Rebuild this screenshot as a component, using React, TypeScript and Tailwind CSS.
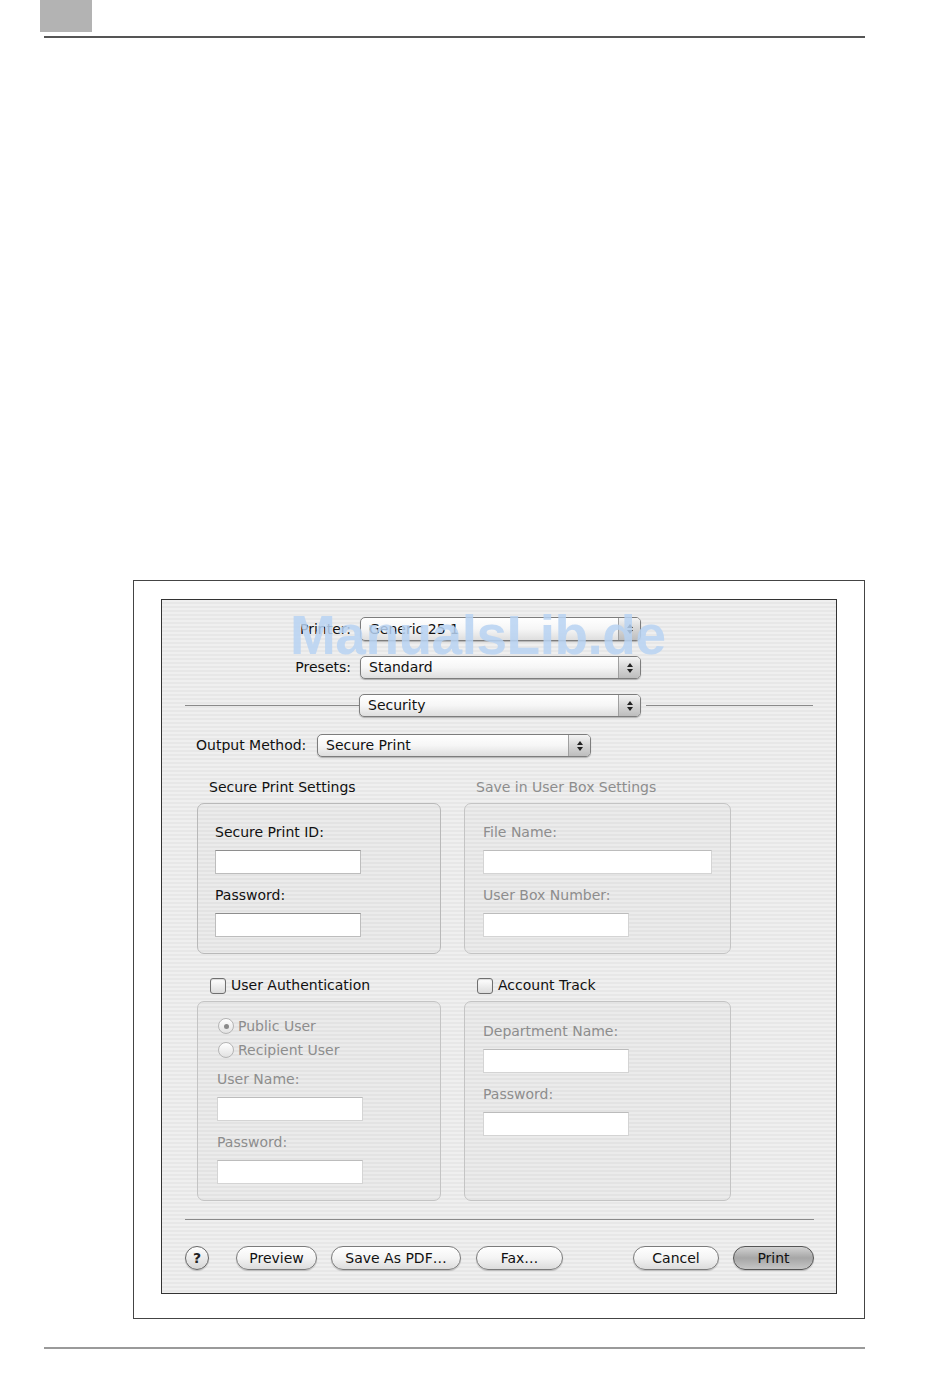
import React from "react";

const FONT = "font-['DejaVu_Sans',sans-serif]";

function Arrows() {
  return (
    <svg width="8" height="12" viewBox="0 0 8 12">
      <path d="M4 1 L7 5 L1 5 Z" fill="#222" />
      <path d="M4 11 L7 7 L1 7 Z" fill="#222" />
    </svg>
  );
}

function Popup({ label, width, h = "h-[24px]" }: { label: string; width: string; h?: string }) {
  return (
    <div
      className={`${width} ${h} flex items-stretch rounded-[5px] border border-[#7d7d7d] bg-gradient-to-b from-white via-[#f6f6f6] to-[#dedede] shadow-[0_1px_1px_rgba(0,0,0,0.25)]`}
    >
      <div className="flex-1 flex items-center pl-[8px] text-[14px] text-[#111]">{label}</div>
      <div className="w-[22px] flex items-center justify-center border-l border-[#a0a0a0] rounded-r-[4px] bg-gradient-to-b from-[#f4f4f4] via-[#d6d6d6] to-[#bdbdbd]">
        <Arrows />
      </div>
    </div>
  );
}

function Field({ width, disabled = false }: { width: string; disabled?: boolean }) {
  return (
    <div
      className={`${width} h-[24px] bg-white border ${
        disabled ? "border-[#d4d4d4] border-t-[#bcbcbc]" : "border-[#bdbdbd] border-t-[#8e8e8e]"
      }`}
    />
  );
}

function Checkbox({ label }: { label: string }) {
  return (
    <div className="flex items-center gap-[5px]">
      <div className="w-[16px] h-[16px] rounded-[3px] border border-[#6f6f6f] bg-gradient-to-b from-white to-[#dcdcdc] shadow-[inset_0_1px_1px_rgba(0,0,0,0.15)]" />
      <span className="text-[14px] text-[#111]">{label}</span>
    </div>
  );
}

function Radio({ label, checked }: { label: string; checked?: boolean }) {
  return (
    <div className="flex items-center gap-[4px] h-[16px]">
      <div className="w-[16px] h-[16px] rounded-full border border-[#b5b5b5] bg-gradient-to-b from-white to-[#e2e2e2] flex items-center justify-center">
        {checked && <div className="w-[5px] h-[5px] rounded-full bg-[#8a8a8a]" />}
      </div>
      <span className="text-[14px] text-[#8d8d8d]">{label}</span>
    </div>
  );
}

function Label({ children, dim, className = "" }: { children: React.ReactNode; dim?: boolean; className?: string }) {
  return (
    <div className={`text-[14px] leading-[16px] ${dim ? "text-[#8d8d8d]" : "text-[#111]"} ${className}`}>
      {children}
    </div>
  );
}

function PillButton({ label, width, primary }: { label: string; width: string; primary?: boolean }) {
  return (
    <div
      className={`${width} h-[24px] rounded-full border flex items-center justify-center text-[14px] text-[#111] shadow-[0_1px_1px_rgba(0,0,0,0.2)] ${
        primary
          ? "border-[#555] bg-gradient-to-b from-[#d2d2d2] via-[#a6a6a6] to-[#c6c6c6]"
          : "border-[#7b7b7b] bg-gradient-to-b from-white via-[#f4f4f4] to-[#dcdcdc]"
      }`}
    >
      {label}
    </div>
  );
}

export default function App() {
  return (
    <div className={`w-[950px] h-[1378px] bg-white ${FONT} overflow-hidden`}>
      <div className="ml-[40px] w-[52px] h-[32px] bg-[#b3b3b3]" />
      <div className="ml-[44px] mt-[4px] w-[821px] h-[2px] bg-[#555]" />

      <div className="mt-[542px] ml-[133px] w-[732px] h-[739px] border border-[#444] pt-[18px] pl-[27px]">
        <div className="relative w-[676px] h-[695px] border border-[#333] bg-[repeating-linear-gradient(180deg,#efefef_0px,#efefef_2px,#e7e7e7_2px,#e7e7e7_4px)]">
          {/* printer / presets */}
          <div className="pt-[17px] flex flex-col gap-[15px]">
            <div className="flex items-center">
              <div className="w-[189px] text-right text-[14px] text-[#111]">Printer:</div>
              <div className="ml-[9px]">
                <Popup label="Generic 25 1" width="w-[281px]" />
              </div>
            </div>
            <div className="flex items-center">
              <div className="w-[189px] text-right text-[14px] text-[#111]">Presets:</div>
              <div className="ml-[9px]">
                <Popup label="Standard" width="w-[281px]" h="h-[23px]" />
              </div>
            </div>
          </div>

          <div className="mt-[15px] flex items-center">
            <div className="ml-[23px] w-[174px] h-px bg-[#8a8a8a]" />
            <Popup label="Security" width="w-[282px]" h="h-[23px]" />
            <div className="ml-[5px] w-[167px] h-px bg-[#8a8a8a]" />
          </div>

          <div className="mt-[17px] flex items-center ml-[34px]">
            <div className="w-[121px] text-[14px] text-[#111]">Output Method:</div>
            <Popup label="Secure Print" width="w-[274px]" h="h-[23px]" />
          </div>

          {/* top groups */}
          <div className="mt-[22px] ml-[35px] flex gap-[23px]">
            <div className="w-[244px]">
              <Label className="ml-[12px]">Secure Print Settings</Label>
              <div className="mt-[8px] h-[151px] rounded-[7px] border border-[#b9b9b9] bg-black/[0.015] pl-[17px] pt-[20px]">
                <Label>Secure Print ID:</Label>
                <div className="mt-[10px]">
                  <Field width="w-[146px]" />
                </div>
                <Label className="mt-[13px]">Password:</Label>
                <div className="mt-[10px]">
                  <Field width="w-[146px]" />
                </div>
              </div>
            </div>
            <div className="w-[267px]">
              <Label dim className="ml-[12px]">Save in User Box Settings</Label>
              <div className="mt-[8px] h-[151px] rounded-[7px] border border-[#c4c4c4] bg-black/[0.015] pl-[18px] pt-[20px]">
                <Label dim>File Name:</Label>
                <div className="mt-[10px]">
                  <Field width="w-[229px]" disabled />
                </div>
                <Label dim className="mt-[13px]">User Box Number:</Label>
                <div className="mt-[10px]">
                  <Field width="w-[146px]" disabled />
                </div>
              </div>
            </div>
          </div>

          {/* bottom groups */}
          <div className="mt-[21px] ml-[35px] flex gap-[23px]">
            <div className="w-[244px]">
              <div className="ml-[13px]">
                <Checkbox label="User Authentication" />
              </div>
              <div className="mt-[5px] h-[200px] rounded-[7px] border border-[#c4c4c4] bg-black/[0.015] pl-[19px] pt-[16px]">
                <div className="ml-[1px] flex flex-col gap-[8px]">
                  <Radio label="Public User" checked />
                  <Radio label="Recipient User" />
                </div>
                <Label dim className="mt-[13px]">User Name:</Label>
                <div className="mt-[10px]">
                  <Field width="w-[146px]" disabled />
                </div>
                <Label dim className="mt-[13px]">Password:</Label>
                <div className="mt-[10px]">
                  <Field width="w-[146px]" disabled />
                </div>
              </div>
            </div>
            <div className="w-[267px]">
              <div className="ml-[13px]">
                <Checkbox label="Account Track" />
              </div>
              <div className="mt-[5px] h-[200px] rounded-[7px] border border-[#c4c4c4] bg-black/[0.015] pl-[18px] pt-[21px]">
                <Label dim>Department Name:</Label>
                <div className="mt-[10px]">
                  <Field width="w-[146px]" disabled />
                </div>
                <Label dim className="mt-[13px]">Password:</Label>
                <div className="mt-[10px]">
                  <Field width="w-[146px]" disabled />
                </div>
              </div>
            </div>
          </div>

          <div className="mt-[18px] ml-[23px] w-[629px] h-px bg-[#8a8a8a]" />

          {/* buttons */}
          <div className="mt-[26px] ml-[23px] flex items-center">
            <div className="w-[24px] h-[24px] rounded-full border border-[#666] bg-gradient-to-b from-white to-[#d6d6d6] flex items-center justify-center text-[14px] font-bold text-[#222] shadow-[0_1px_1px_rgba(0,0,0,0.2)]">
              ?
            </div>
            <div className="ml-[27px]">
              <PillButton label="Preview" width="w-[81px]" />
            </div>
            <div className="ml-[14px]">
              <PillButton label="Save As PDF…" width="w-[130px]" />
            </div>
            <div className="ml-[15px]">
              <PillButton label="Fax…" width="w-[87px]" />
            </div>
            <div className="ml-[70px]">
              <PillButton label="Cancel" width="w-[86px]" />
            </div>
            <div className="ml-[14px]">
              <PillButton label="Print" width="w-[81px]" primary />
            </div>
          </div>

          {/* watermark */}
          <div className="absolute left-[128px] top-[4px] text-[55px] leading-[62px] font-bold font-['Liberation_Sans',sans-serif] text-[#b7d2f2]/85 tracking-[-0.5px] pointer-events-none">
            ManualsLib.de
          </div>
        </div>
      </div>

      <div className="mt-[28px] ml-[44px] w-[821px] h-[2px] bg-[#9a9a9a]" />
    </div>
  );
}
